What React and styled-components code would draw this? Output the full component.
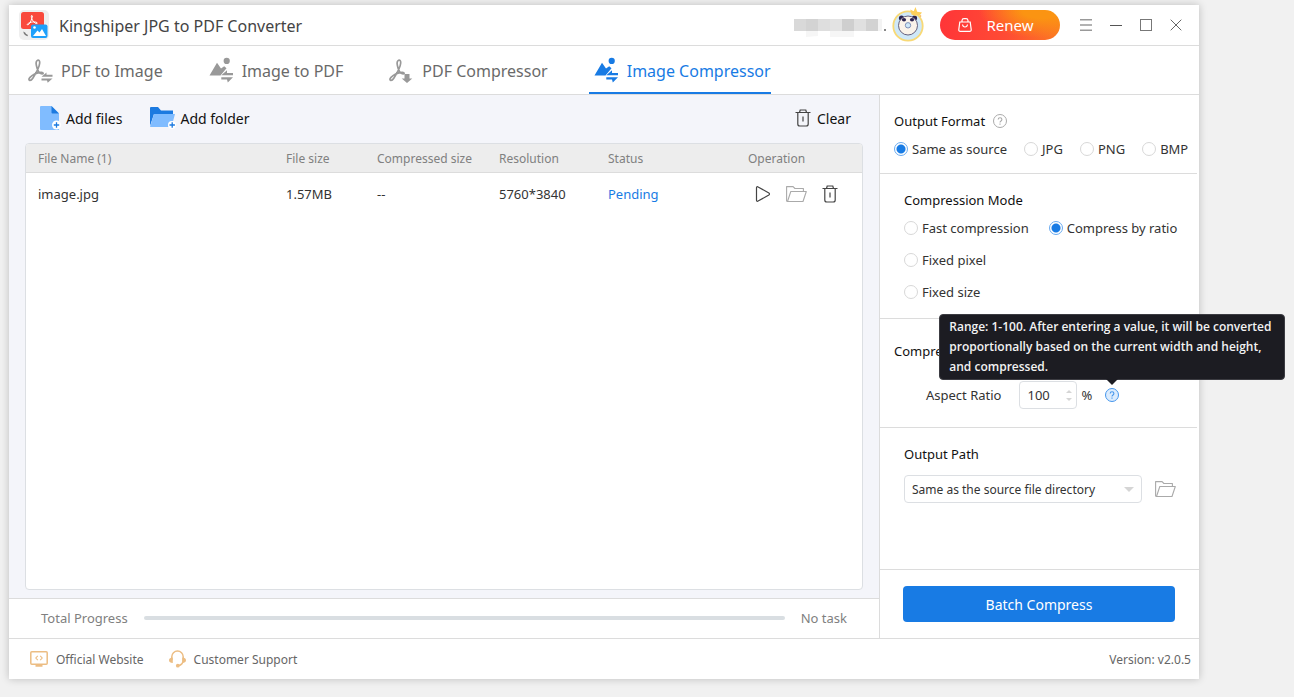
import React, { useState } from 'react';
import styled, { createGlobalStyle } from "styled-components";

const GlobalStyle = createGlobalStyle`
  * {
    box-sizing: border-box;
  }
  body {
    margin: 0;
    background: #f1f1f1;
    font-family: "Noto Sans", "Open Sans", sans-serif;
    font-size: 13px;
    color: #333;
  }
  button, input, select {
    font-family: inherit;
    color: inherit;
  }
  svg {
    display: block;
    flex: none;
  }
`;

const Page = styled.div`
  min-height: 100vh;
  display: flex;
  padding: 5px 95px 18px 9px;
`;

const AppWindow = styled.div`
  flex: 1;
  min-width: 0;
  display: flex;
  flex-direction: column;
  background: #fff;
  box-shadow: 0 0 8px rgba(0, 0, 0, 0.22);
`;

const TitleBar = styled.header`
  display: flex;
  align-items: center;
  height: 41px;
  padding: 0 8px 0 10px;
  border-bottom: 1px solid #dcdcdc;
`;

const AppTitle = styled.h1`
  flex: 1;
  margin: 0 0 0 10px;
  padding-top: 2px;
  font-size: 16px;
  font-weight: normal;
  color: #444;
`;

const Account = styled.div`
  display: flex;
  align-items: center;
  gap: 6px;
  margin-right: 16px;
`;

const RenewButton = styled.button`
  display: flex;
  align-items: center;
  justify-content: center;
  gap: 14px;
  width: 120px;
  height: 30px;
  margin-right: 11px;
  padding: 0 8px 0 0;
  border: none;
  border-radius: 15px;
  background:
    radial-gradient(ellipse 62px 28px at 84% 0, #fb9412 30%, rgba(251, 130, 25, 0) 100%),
    linear-gradient(90deg, #ff3538 0%, #ff4b34 55%, #fb7a22 100%);
  color: #fff;
  font-size: 15px;
`;

const WindowButton = styled.button`
  display: flex;
  align-items: center;
  justify-content: center;
  width: 30px;
  height: 30px;
  padding: 0;
  border: none;
  background: none;
`;

const TabBar = styled.nav`
  display: flex;
  gap: 41px;
  height: 49px;
  padding-left: 14px;
  border-bottom: 1px solid #dcdcdc;
`;

const Tab = styled.button`
  display: flex;
  align-items: center;
  gap: 6px;
  padding: 4px 0 0;
  border: none;
  border-bottom: 2px solid ${props => props.$active ? "#187be4" : "transparent"};
  background: none;
  font-size: 16px;
  color: ${props => props.$active ? "#187be4" : "#6a6a6a"};

  svg {
    color: ${props => props.$active ? "#187be4" : "#999"};
  }
`;

const Body = styled.div`
  flex: 1;
  display: grid;
  grid-template-columns: minmax(0, 1fr) 320px;
`;

const Workspace = styled.main`
  display: flex;
  flex-direction: column;
  background: #f4f5fa;
`;

const Toolbar = styled.div`
  display: flex;
  align-items: center;
  gap: 28px;
  height: 48px;
  padding: 0 28px 2px 31px;
`;

const ToolButton = styled.button`
  display: flex;
  align-items: center;
  gap: ${props => props.$gap || 4}px;
  margin-left: ${props => props.$end ? "auto" : 0};
  padding: 0;
  border: none;
  background: none;
  font-size: 14px;
  color: #111;
`;

const FilePanel = styled.div`
  flex: 1;
  margin: 0 16px 8px;
  border: 1px solid #dcdfe3;
  border-radius: 4px;
  background: #fff;
  overflow: hidden;
`;

const FileTable = styled.table`
  width: 100%;
  table-layout: fixed;
  border-collapse: separate;
  border-spacing: 0;
`;

const HeadCell = styled.th`
  width: ${props => props.$width ? props.$width + "px" : "auto"};
  height: 29px;
  padding: 0 0 0 12px;
  border-bottom: 1px solid #dcdcdc;
  background: #ededed;
  text-align: left;
  font-size: 12px;
  font-weight: normal;
  color: #808080;
`;

const Cell = styled.td`
  height: 42px;
  padding: 0 0 0 12px;
  color: ${props => props.$status ? "#187be4" : "#333"};
`;

const RowActions = styled.div`
  display: flex;
  align-items: center;
  gap: 15px;
  padding-left: 7px;
`;

const IconButton = styled.button`
  padding: 0;
  border: none;
  background: none;
`;

const ProgressRow = styled.div`
  display: flex;
  align-items: center;
  gap: 16px;
  height: 40px;
  padding: 0 32px 2px;
  border-top: 1px solid #dcdcdc;
  background: #fff;
  color: #808080;
`;

const ProgressTrack = styled.div`
  flex: 1;
  height: 4px;
  border-radius: 2px;
  background: #d9dee2;
`;

const Sidebar = styled.aside`
  display: flex;
  flex-direction: column;
  border-left: 1px solid #dcdcdc;
`;

const Section = styled.section`
  margin-right: ${props => props.$last ? 0 : 2}px;
  padding: ${props => props.$pad};
  flex: ${props => props.$last ? 1 : "none"};
  border-bottom: 1px solid #dcdcdc;
`;

const SectionTitle = styled.h2`
  display: flex;
  align-items: center;
  gap: 8px;
  margin: 0;
  font-size: 13px;
  line-height: 20px;
  font-weight: normal;
  color: #111;
`;

const FormatRow = styled.div`
  display: flex;
  gap: 17px;
  margin-top: 8px;
`;

const ModeGrid = styled.div`
  display: grid;
  grid-template-columns: auto auto;
  justify-content: start;
  gap: 12px 20px;
  margin-top: 8px;
`;

const RadioLabel = styled.label`
  display: flex;
  align-items: center;
  gap: 4px;
  line-height: 20px;
  white-space: nowrap;
  grid-column-start: ${props => props.$newRow ? 1 : "auto"};
`;

const RadioInput = styled.input`
  appearance: none;
  width: 14px;
  height: 14px;
  margin: 0;
  border: 1px solid #d8d8d8;
  border-radius: 50%;
  background: #fff;

  &:checked {
    border-color: #6aabf0;
    background: radial-gradient(circle, #187be4 4px, #fff 5px);
  }
`;

const RatioRow = styled.div`
  display: flex;
  align-items: center;
  margin-top: 20px;
  padding-left: 32px;
  font-size: 13px;
`;

const NumberBox = styled.div`
  display: flex;
  align-items: center;
  width: 58px;
  height: 28px;
  margin: 0 4px 0 18px;
  padding: 0 4px 0 7px;
  border: 1px solid #dcdfe3;
  border-radius: 4px;
`;

const NumberInput = styled.input`
  flex: 1;
  width: 0;
  padding: 0;
  border: none;
  outline: none;
  background: none;
  font-size: 13px;
  appearance: textfield;

  &::-webkit-inner-spin-button {
    appearance: none;
    margin: 0;
  }
`;

const Stepper = styled.div`
  display: flex;
  flex-direction: column;
  gap: 5px;
`;

const HelpAnchor = styled.span`
  position: relative;
  margin-left: 13px;
`;

const Tooltip = styled.div`
  position: absolute;
  left: 50%;
  bottom: 22px;
  z-index: 2;
  width: 346px;
  margin-left: -173px;
  padding: 2px 9px;
  border: 1px solid #3c3c42;
  border-radius: 4px;
  background: #1c1c22;
  color: #f2f2f2;
  font-family: "Open Sans", sans-serif;
  font-size: 12px;
  font-weight: 600;
  line-height: 20px;

  &::after {
    content: "";
    position: absolute;
    top: 100%;
    left: 50%;
    margin-left: -6px;
    border: 6px solid transparent;
    border-top-color: #1c1c22;
    border-bottom: none;
  }
`;

const PathRow = styled.div`
  display: flex;
  align-items: center;
  gap: 13px;
  margin-top: 11px;
`;

const SelectBox = styled.div`
  display: grid;
  align-items: center;
  width: 238px;

  > * {
    grid-area: 1 / 1;
  }
  svg {
    justify-self: end;
    margin-right: 8px;
    pointer-events: none;
  }
`;

const PathSelect = styled.select`
  appearance: none;
  width: 100%;
  height: 28px;
  padding: 0 24px 0 7px;
  border: 1px solid #dcdfe3;
  border-radius: 4px;
  background: #fff;
  font-size: 12px;
`;

const ActionArea = styled.div`
  padding: 16px 24px 16px 23px;
`;

const PrimaryButton = styled.button`
  width: 100%;
  height: 36px;
  border: none;
  border-radius: 4px;
  background: #187be4;
  color: #fff;
  font-size: 14px;
`;

const Footer = styled.footer`
  display: flex;
  align-items: center;
  gap: 25px;
  height: 41px;
  padding: 0 8px 0 21px;
  border-top: 1px solid #dcdcdc;
  font-size: 12px;
  color: #666;
`;

const FooterLink = styled.a`
  display: flex;
  align-items: center;
  gap: 8px;
  color: inherit;
  text-decoration: none;
`;

const Version = styled.span`
  margin-left: auto;
`;

/* ---------- icons ---------- */

const LogoIcon = () => (
  <svg width="30" height="30" viewBox="0 0 30 30">
    <rect x="0" y="0" width="30" height="30" rx="5" fill="#efefef" />
    <path d="M4.300 21.500c.4 2.800 2 4.500 4.700 4.800l-.6-1.700c-1.200-.3-1.700-.8-2-1.800z" fill="#777" />
    <rect x="2" y="2" width="23" height="17" rx="2.500" fill="#f9493c" />
    <path d="M13 5.500c-1.200-.3-.8 2.500.5 4.700s3.800 4 4.700 3.200-2-1.900-4.700-1.400-5.700 1.800-5.200 2.700 2.700-1.200 3.700-4 2-4.900 1-5.200z" fill="none" stroke="#fff" strokeWidth="1" />
    <rect x="12" y="14.500" width="16.500" height="13.500" rx="2" fill="#1ea0fb" />
    <circle cx="15.500" cy="17.500" r="1.300" fill="#fff" />
    <path d="M14 26l4.500-5.500 2 2 2.500-3.500 4 7z" fill="#fff" />
  </svg>
);

const AvatarIcon = () => (
  <svg width="32" height="36" viewBox="0 0 32 36">
    <circle cx="16" cy="19" r="14.700" fill="#cfe8f8" stroke="#f8d976" strokeWidth="1.800" />
    <circle cx="9.500" cy="11" r="2.600" fill="#2b2450" />
    <circle cx="22.500" cy="11" r="2.600" fill="#2b2450" />
    <circle cx="16" cy="18.500" r="9.500" fill="#faf3ea" stroke="#57506f" strokeWidth=".9" />
    <ellipse cx="12" cy="12.800" rx="2.100" ry="1.700" fill="#2b2450" />
    <ellipse cx="20" cy="12.800" rx="2.100" ry="1.700" fill="#2b2450" />
    <circle cx="16" cy="18.300" r="2.700" fill="#cfe8f8" stroke="#8091b8" strokeWidth="1" />
    <path d="M19.500 7.500L18.300 2.500l3.400 1.700L23.500 0l1.700 4.700 4.800.8-2.600 3.300-2-.7-2 1z" fill="#fcd05c" />
    <circle cx="28.500" cy="9" r=".8" fill="#f6a63c" />
  </svg>
);

const NameMask = () => (
  <svg width="92" height="24" viewBox="0 0 92 24">
    <rect x="0" y="6" width="12" height="12" fill="#d9d9d9" />
    <rect x="12" y="6" width="12" height="12" fill="#d3d3d3" />
    <rect x="24" y="6" width="12" height="12" fill="#dedede" />
    <rect x="36" y="6" width="12" height="12" fill="#e3e3e3" />
    <rect x="48" y="6" width="12" height="12" fill="#cfcfcf" />
    <rect x="60" y="6" width="12" height="12" fill="#e0e0e0" />
    <rect x="72" y="6" width="12" height="12" fill="#d2d2d2" />
    <rect x="84" y="6" width="4" height="12" fill="#f3f3f3" />
    <path d="M12 18h12v5l-12 1zM36 18h24v6H36z" fill="#f6f6f6" />
    <rect x="90" y="16" width="2" height="2" fill="#888" />
  </svg>
);

const BagIcon = () => (
  <svg width="14" height="14" viewBox="0 0 14 14" fill="none" stroke="#fff" strokeWidth="1.200">
    <path d="M1.800 4h10.400l1 7.500a1.500 1.500 0 0 1-1.500 1.800H2.300a1.500 1.500 0 0 1-1.500-1.800z" />
    <path d="M4 4V2.500A2 2 0 0 1 6 .7h2a2 2 0 0 1 2 1.800V4M4.500 6.500c.5 3.300 4.500 3.300 5 0" />
  </svg>
);

const MenuIcon = () => (
  <svg width="12" height="12" viewBox="0 0 12 12" stroke="#999" strokeWidth="1.500">
    <path d="M0 .8h12M0 6h12M0 11.200h12" />
  </svg>
);

const MinimizeIcon = () => (
  <svg width="12" height="12" viewBox="0 0 12 12" stroke="#555">
    <path d="M0 6.500h12" />
  </svg>
);

const MaximizeIcon = () => (
  <svg width="12" height="12" viewBox="0 0 12 12" fill="none" stroke="#777">
    <rect x=".5" y=".5" width="11" height="11" />
  </svg>
);

const CloseIcon = () => (
  <svg width="12" height="12" viewBox="0 0 12 12" stroke="#666">
    <path d="M.7.7l10.600 10.600M11.300.7L.7 11.300" />
  </svg>
);

const pdfPath = "M13.400 8.500C12 2.500 17 1.200 16.700 6c-.3 4-4.200 11-6.900 15.200-2.500 3.800-5.500 2-2.800-.9 2.800-2.800 7.200-4.700 11-5 2.800-.2 2.800 2.200.3 1.500-2.700-.8-4.200-4.800-4.900-8.300z";

const PdfConvertIcon = () => (
  <svg width="32" height="28" viewBox="0 0 32 28">
    <path d={pdfPath} fill="none" stroke="currentColor" strokeWidth="1.700" />
    <path d="M18.500 19.700l5-4.200v2.200h6v2zM18.500 21.500h11l-4.800 4.200-.7-2.200h-5.500z" fill="currentColor" />
  </svg>
);

const PdfShrinkIcon = () => (
  <svg width="32" height="28" viewBox="0 0 32 28">
    <path d={pdfPath} fill="none" stroke="currentColor" strokeWidth="1.700" />
    <path d="M20.500 17h5v4.500h2.800L23 26l-5.300-4.500h2.800z" fill="currentColor" />
  </svg>
);

const ImageConvertIcon = () => (
  <svg width="32" height="28" viewBox="0 0 32 28" fill="currentColor">
    <circle cx="22.700" cy="3.900" r="3.100" />
    <path d="M5.500 18.500L13 5.800l4 5.700 3.200-2.300 2.300 2-6 7.300z" />
    <path d="M17.300 18.300l5.700-5v2.700h6v2.300zM17.300 20.200H29L23.800 25.500 23 22.600h-5.700z" />
  </svg>
);

const AddFileIcon = () => (
  <svg width="22" height="24" viewBox="0 0 22 24">
    <path d="M1 0h10.500l7.500 7.500V24H1a1 1 0 0 1-1-1V1a1 1 0 0 1 1-1z" fill="#80bcff" />
    <path d="M11.500 0L19 7.500h-6.500a1 1 0 0 1-1-1z" fill="#1c7ae0" />
    <circle cx="16.500" cy="19" r="4.500" fill="#fff" />
    <path d="M13.800 19h5.400M16.500 16.300v5.400" stroke="#1c7ae0" strokeWidth="1.300" />
  </svg>
);

const AddFolderIcon = () => (
  <svg width="26" height="24" viewBox="0 0 26 24">
    <path d="M0 2a1 1 0 0 1 1-1h7l3 3.500h12V8H4L0 20z" fill="#1c7ae0" />
    <path d="M4 8h21l-3.500 13H0z" fill="#80bcff" />
    <circle cx="22" cy="19" r="4" fill="#fff" />
    <path d="M19.500 19h5.400M22.200 16.300v5.400" stroke="#1c7ae0" strokeWidth="1.300" />
  </svg>
);

const TrashIcon = () => (
  <svg width="16" height="18" viewBox="0 0 16 18" fill="none" stroke="#444" strokeWidth="1.200">
    <path d="M.5 3.500h15M4.500 3.500L5.200 1h5.600l.7 2.500M2.800 3.500v11.500a2 2 0 0 0 2 2h6.400a2 2 0 0 0 2-2V3.500M8 7.500v5" />
  </svg>
);

const PlayIcon = () => (
  <svg width="16" height="18" viewBox="0 0 16 18" fill="none" stroke="#444" strokeWidth="1.200">
    <path d="M1.500 2.700v12.600c0 .9.900 1.200 1.600.8l10.800-6.200c.8-.5.8-1.300 0-1.800L3.100 1.900c-.7-.4-1.600-.1-1.600.8z" />
  </svg>
);

const OpenFolderIcon = () => (
  <svg width="21" height="18" viewBox="0 0 21 18" fill="none" stroke="#aaa" strokeWidth="1.100" strokeLinejoin="round">
    <path d="M1.500 16.500l-.9-.5V1.600h6.500l1.800 1.900h8.500v3" />
    <path d="M4.800 6.500h15.500l-3.300 10H1.500z" />
  </svg>
);

const HelpIcon = ({ active }) => (
  <svg width="14" height="14" viewBox="0 0 14 14" fill="none" stroke={active ? "#4596ec" : "#aaa"}>
    <circle cx="7" cy="7" r="6.500" fill={active ? "#dcecfd" : "#fff"} />
    <path d="M5.200 5.600c0-2.400 3.700-2.400 3.700 0C8.900 7 7 6.900 7 8.500M7 9.500v1.200" strokeWidth="1.100" />
  </svg>
);

const Caret = ({ up, width, color }) => (
  <svg width={width} height={width / 2} viewBox="0 0 10 5">
    <path d={up ? "M0 5L5 0l5 5z" : "M0 0h10L5 5z"} fill={color} />
  </svg>
);

const WebsiteIcon = () => (
  <svg width="18" height="16" viewBox="0 0 18 16" fill="none" stroke="#ecbd83" strokeWidth="1.500">
    <rect x=".8" y=".8" width="16.400" height="12.400" rx="1" />
    <path d="M7.800 4.800L5.800 7l2 2.200M10.200 4.800l2 2.200-2 2.200" strokeWidth="1.100" />
    <path d="M5.500 14.500h7" strokeWidth="2.500" />
  </svg>
);

const SupportIcon = () => (
  <svg width="17" height="18" viewBox="0 0 17 18">
    <path d="M2.800 10V6.800a5.700 5.700 0 0 1 11.400 0V10c0 3-1.500 5-5 5.800" fill="none" stroke="#ecbd83" strokeWidth="1.500" />
    <path d="M3.800 7.500v5.500C1.500 13 0 12 0 10.200S1.500 7.500 3.800 7.500zM13.200 7.500v5.500c2.300 0 3.800-1 3.800-2.800s-1.500-2.700-3.800-2.700z" fill="#ecbd83" />
    <circle cx="8.800" cy="15.700" r="1.900" fill="#ecbd83" />
  </svg>
);

/* ---------- data ---------- */

const tabs = [
  { name: "PDF to Image", icon: <PdfConvertIcon /> },
  { name: "Image to PDF", icon: <ImageConvertIcon /> },
  { name: "PDF Compressor", icon: <PdfShrinkIcon /> },
  { name: "Image Compressor", icon: <ImageConvertIcon /> },
];

const files = [
  { name: "image.jpg", size: "1.57MB", compressed: "--", resolution: "5760*3840", status: "Pending" },
];

const columns = [
  { title: `File Name (${files.length})` },
  { title: "File size", width: 91 },
  { title: "Compressed size", width: 122 },
  { title: "Resolution", width: 109 },
  { title: "Status", width: 140 },
  { title: "Operation", width: 126 },
];

const formats = ["Same as source", "JPG", "PNG", "BMP"];
const modes = ["Fast compression", "Compress by ratio", "Fixed pixel", "Fixed size"];

function Radio({ group, value, current, onPick, newRow }) {
  return (
    <RadioLabel $newRow={newRow}>
      <RadioInput type="radio" name={group} checked={current === value} onChange={() => onPick(value)} />
      {value}
    </RadioLabel>
  );
}

function FileList() {
  return (
    <FilePanel>
      <FileTable>
        <thead>
          <tr>
            {columns.map((col) => (
              <HeadCell key={col.title} $width={col.width}>{col.title}</HeadCell>
            ))}
          </tr>
        </thead>
        <tbody>
          {files.map((file) => (
            <tr key={file.name}>
              <Cell>{file.name}</Cell>
              <Cell>{file.size}</Cell>
              <Cell>{file.compressed}</Cell>
              <Cell>{file.resolution}</Cell>
              <Cell $status>{file.status}</Cell>
              <Cell>
                <RowActions>
                  <IconButton aria-label="Start"><PlayIcon /></IconButton>
                  <IconButton aria-label="Open folder"><OpenFolderIcon /></IconButton>
                  <IconButton aria-label="Delete"><TrashIcon /></IconButton>
                </RowActions>
              </Cell>
            </tr>
          ))}
        </tbody>
      </FileTable>
    </FilePanel>
  );
}

function Settings() {
  const [format, setFormat] = useState("Same as source");
  const [mode, setMode] = useState("Compress by ratio");
  const [ratio, setRatio] = useState(100);

  const step = (n) => setRatio(Math.min(100, Math.max(1, Number(ratio) + n)));

  return (
    <Sidebar>
      <Section $pad="16px 0 14px 14px">
        <SectionTitle>Output Format <HelpIcon /></SectionTitle>
        <FormatRow>
          {formats.map((f) => (
            <Radio key={f} group="format" value={f} current={format} onPick={setFormat} />
          ))}
        </FormatRow>
      </Section>

      <Section $pad="16px 0 16px 24px">
        <SectionTitle>Compression Mode</SectionTitle>
        <ModeGrid>
          {modes.map((m, i) => (
            <Radio key={m} group="mode" value={m} current={mode} onPick={setMode} newRow={i > 1} />
          ))}
        </ModeGrid>
      </Section>

      <Section $pad="22px 0 18px 14px">
        <SectionTitle>Compression</SectionTitle>
        <RatioRow>
          <label htmlFor="ratio">Aspect Ratio</label>
          <NumberBox>
            <NumberInput id="ratio" type="number" min="1" max="100" value={ratio} onChange={(e) => setRatio(e.target.value)} />
            <Stepper>
              <IconButton aria-label="Increase" onClick={() => step(1)}><Caret up width={6} color="#d5d5d5" /></IconButton>
              <IconButton aria-label="Decrease" onClick={() => step(-1)}><Caret width={6} color="#d5d5d5" /></IconButton>
            </Stepper>
          </NumberBox>
          %
          <HelpAnchor>
            <HelpIcon active />
            <Tooltip role="tooltip">
              Range: 1-100. After entering a value, it will be converted proportionally based on the current width and height, and compressed.
            </Tooltip>
          </HelpAnchor>
        </RatioRow>
      </Section>

      <Section $last $pad="16px 0 16px 24px">
        <SectionTitle as="label" htmlFor="path">Output Path</SectionTitle>
        <PathRow>
          <SelectBox>
            <PathSelect id="path">
              <option>Same as the source file directory</option>
            </PathSelect>
            <Caret width={10} color="#d5d5d5" />
          </SelectBox>
          <IconButton aria-label="Browse"><OpenFolderIcon /></IconButton>
        </PathRow>
      </Section>

      <ActionArea>
        <PrimaryButton>Batch Compress</PrimaryButton>
      </ActionArea>
    </Sidebar>
  );
}

function App() {
  const [tab, setTab] = useState("Image Compressor");

  return (
    <Page>
      <GlobalStyle />
      <AppWindow>
        <TitleBar>
          <LogoIcon />
          <AppTitle>Kingshiper JPG to PDF Converter</AppTitle>
          <Account>
            <NameMask />
            <AvatarIcon />
          </Account>
          <RenewButton><BagIcon />Renew</RenewButton>
          <WindowButton aria-label="Menu"><MenuIcon /></WindowButton>
          <WindowButton aria-label="Minimize"><MinimizeIcon /></WindowButton>
          <WindowButton aria-label="Maximize"><MaximizeIcon /></WindowButton>
          <WindowButton aria-label="Close"><CloseIcon /></WindowButton>
        </TitleBar>

        <TabBar>
          {tabs.map((t) => (
            <Tab key={t.name} $active={t.name === tab} onClick={() => setTab(t.name)}>
              {t.icon}
              {t.name}
            </Tab>
          ))}
        </TabBar>

        <Body>
          <Workspace>
            <Toolbar>
              <ToolButton><AddFileIcon />Add files</ToolButton>
              <ToolButton><AddFolderIcon />Add folder</ToolButton>
              <ToolButton $end $gap={6}><TrashIcon />Clear</ToolButton>
            </Toolbar>
            <FileList />
            <ProgressRow>
              <span>Total Progress</span>
              <ProgressTrack />
              <span>No task</span>
            </ProgressRow>
          </Workspace>
          <Settings />
        </Body>

        <Footer>
          <FooterLink href="#website"><WebsiteIcon />Official Website</FooterLink>
          <FooterLink href="#support"><SupportIcon />Customer Support</FooterLink>
          <Version>Version: v2.0.5</Version>
        </Footer>
      </AppWindow>
    </Page>
  );
}

export default App
